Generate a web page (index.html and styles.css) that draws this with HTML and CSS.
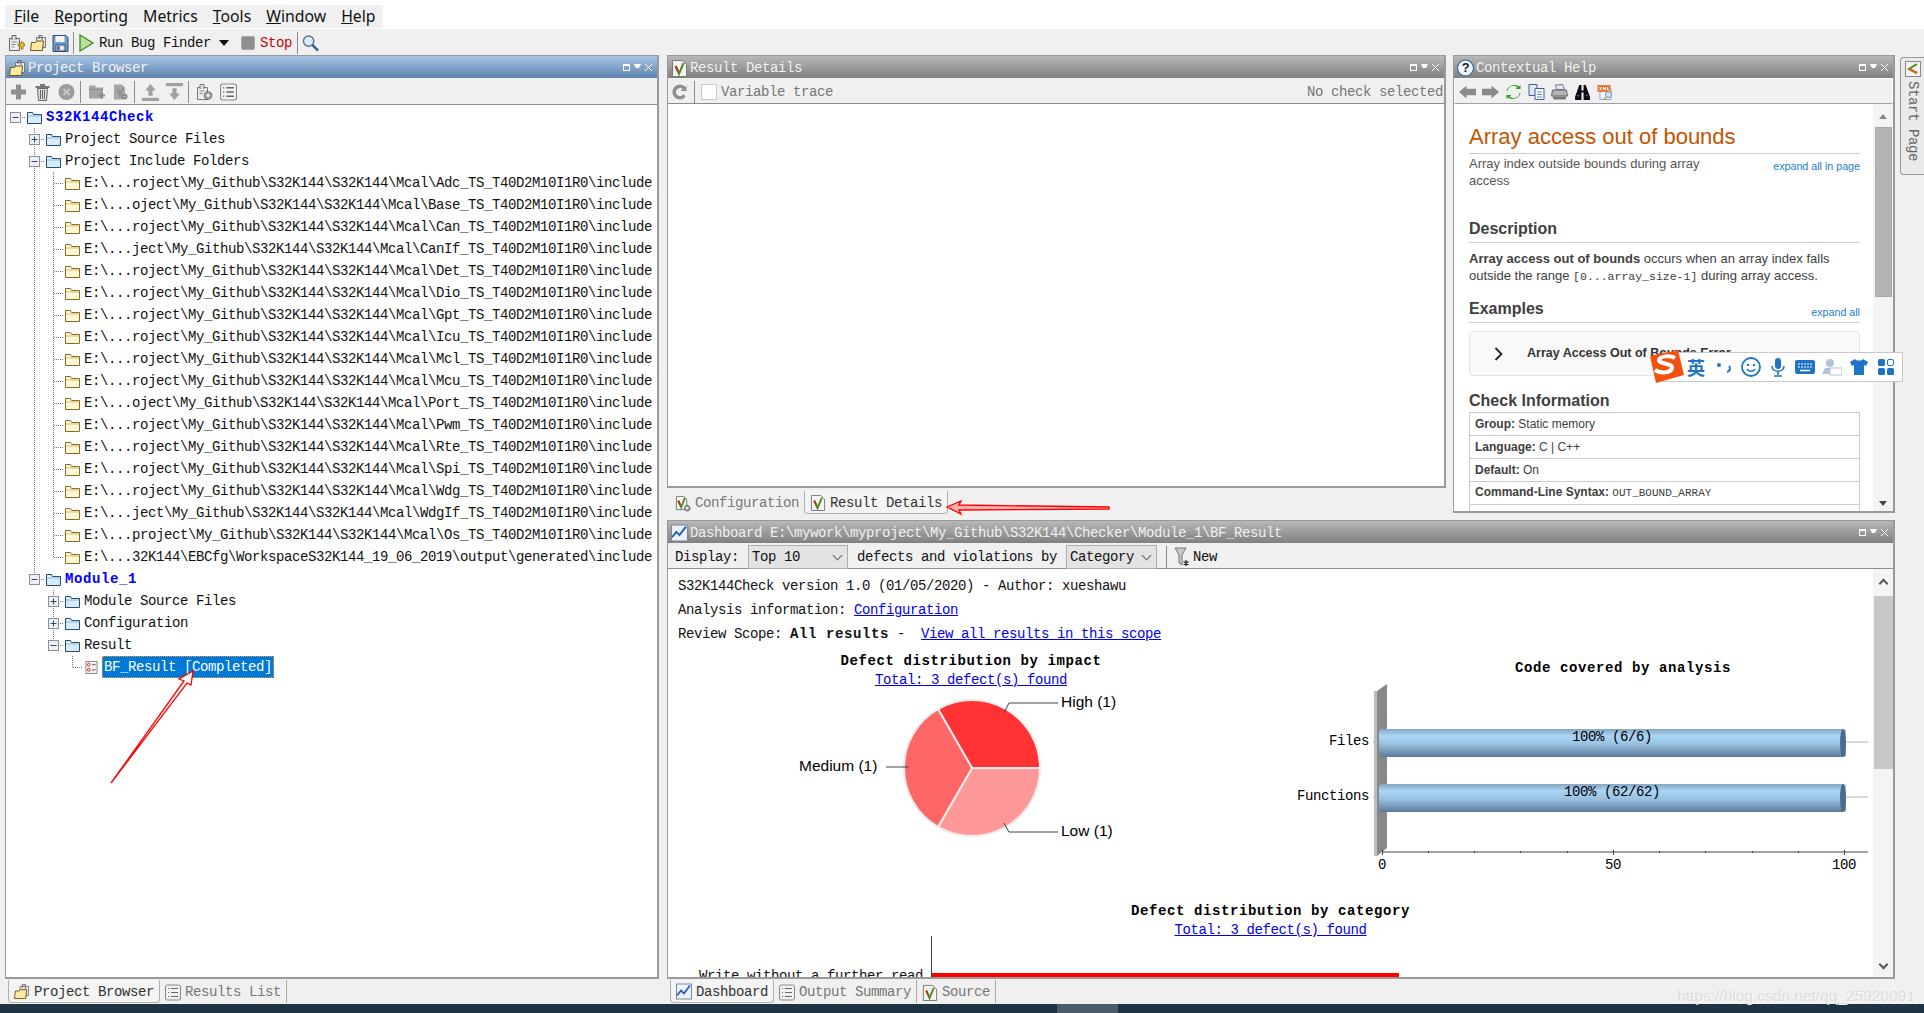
FILE: index.html
```html
<!DOCTYPE html>
<html lang="en">
<head>
    <meta charset="UTF-8">
    <title>Polyspace Bug Finder</title>
    <link rel="stylesheet" href="styles.css">
</head>
<body>

    <!-- Icons -->
    <svg class="defs" width="0" height="0">
        <defs>
            <linearGradient id="barFill" x1="0" y1="0" x2="0" y2="1">
                <stop offset="0" stop-color="#86a5c3"/>
                <stop offset="0.25" stop-color="#abd6f7"/>
                <stop offset="0.55" stop-color="#98bfdf"/>
                <stop offset="1" stop-color="#5c7a9b"/>
            </linearGradient>
        </defs>
        <symbol id="i-exp-plus" viewBox="0 0 11 11"><rect x=".5" y=".5" width="10" height="10" fill="#eef0f4" stroke="#8a8f98"/><path d="M2.500 5.500h6M5.500 2.500v6" stroke="#2b4a78"/></symbol>
        <symbol id="i-exp-minus" viewBox="0 0 11 11"><rect x=".5" y=".5" width="10" height="10" fill="#eef0f4" stroke="#8a8f98"/><path d="M2.500 5.500h6" stroke="#2b4a78"/></symbol>
        <symbol id="i-folder" viewBox="0 0 15 13"><path d="M.5 12.500V1.500h5l1 2h8v9z" fill="#d9ebf8" stroke="#1d4f78"/><path d="M1 5h13" stroke="#8fb8d8"/></symbol>
        <symbol id="i-folder-y" viewBox="0 0 15 13"><path d="M.5 12.500V1.500h5l1 2h8v9z" fill="#fff9d8" stroke="#8b6b22"/><path d="M1 5h13" stroke="#d8bd6a"/></symbol>
        <symbol id="i-project" viewBox="0 0 17 18"><path d="M6.500 3.500h9v10h-9z" fill="#e8e8e8" stroke="#777"/><path d="M9 5V1.500h3V6" fill="none" stroke="#666"/><path d="M.5 16.500l1-8h4l1-1.500h7l-1 9.500z" fill="#fbe9a0" stroke="#6c5a20"/></symbol>
        <symbol id="i-add" viewBox="0 0 17 18"><path d="M1.500 4.500h10v12h-10z" fill="#eee" stroke="#666"/><path d="M4 6V1.500h4V6" fill="#ddd" stroke="#666"/><path d="M3.500 8h6M3.500 10.500h4M3.500 13h3" stroke="#888"/><path d="M10 10h3v-2h2v2h2v2h-2v3h-2v-3h-3z" fill="#f4c430" stroke="#8a6a10" stroke-width=".8"/></symbol>
        <symbol id="i-save" viewBox="0 0 16 18"><path d="M.5 1.500h13l2 2v14H.5z" fill="#6f9cc8" stroke="#2f4f78"/><rect x="3" y="2" width="9" height="6" fill="#f4f4f4"/><rect x="3.500" y="11" width="9" height="6" fill="#e4e4e4" stroke="#2f4f78"/><rect x="5" y="12" width="2" height="4" fill="#2f4f78"/></symbol>
        <symbol id="i-play" viewBox="0 0 15 18"><path d="M1 1l13 8-13 8z" fill="#b8e29a" stroke="#3c8a2a" stroke-width="1.300"/></symbol>
        <symbol id="i-lens" viewBox="0 0 18 18"><circle cx="7" cy="7" r="5.500" fill="#d8ecf8" stroke="#5a7088" stroke-width="1.500"/><path d="M11 11l6 6" stroke="#2f5f98" stroke-width="2.500"/></symbol>
        <symbol id="i-plus" viewBox="0 0 17 17"><path d="M6 1h5v5h5v5h-5v5H6v-5H1V6h5z" fill="#8f8f8f"/></symbol>
        <symbol id="i-trash" viewBox="0 0 17 18"><path d="M1.500 3h14v2h-14zM6 1h5v2H6z" fill="#777"/><path d="M3.500 5.500h10l-1 12h-8z" fill="#dcdcdc" stroke="#666"/><path d="M6.500 7v9M8.500 7v9M10.500 7v9" stroke="#666"/></symbol>
        <symbol id="i-stopx" viewBox="0 0 17 17"><circle cx="8.500" cy="8.500" r="8" fill="#9c9c9c"/><path d="M5.500 5.500l6 6M11.500 5.500l-6 6" stroke="#c8c8c8" stroke-width="1.800"/></symbol>
        <symbol id="i-doc-g" viewBox="0 0 17 17"><path d="M1 2h6l1 2h7v11H1z" fill="#a4a4a4"/><path d="M1 6h14" stroke="#8a8a8a"/><path d="M11 11h2V9h2v2h2v2h-2v2h-2v-2h-2z" fill="#8a8a8a"/></symbol>
        <symbol id="i-doc-x" viewBox="0 0 17 17"><path d="M2 1h8l3 3v8h-2v4H2z" fill="#a6a6a6"/><path d="M6 6l2 6 3-8" fill="none" stroke="#8a8a8a" stroke-width="1.500"/><circle cx="12.500" cy="13" r="3" fill="#8a8a8a"/><circle cx="12.500" cy="13" r="1" fill="#c8c8c8"/></symbol>
        <symbol id="i-up" viewBox="0 0 16 17"><path d="M8 1l5 6h-3v5H6V7H3z" fill="#a0a0a0"/><rect y="14" width="16" height="3" fill="#a0a0a0"/></symbol>
        <symbol id="i-down" viewBox="0 0 16 17"><rect width="16" height="3" fill="#a0a0a0"/><path d="M8 16l5-6h-3V5H6v5H3z" fill="#a0a0a0"/></symbol>
        <symbol id="i-cfg" viewBox="0 0 17 18"><path d="M1.500 4.500h10v12h-10z" fill="#eee" stroke="#777"/><path d="M4 6V1.500h4V6" fill="#ddd" stroke="#777"/><path d="M3.500 8h5M3.500 10.500h3" stroke="#888"/><circle cx="12" cy="12.500" r="3.800" fill="#aaa" stroke="#444" stroke-dasharray="2 .6"/><circle cx="12" cy="12.500" r="1.300" fill="#fff"/></symbol>
        <symbol id="i-cfgcheck" viewBox="0 0 17 18"><path d="M1.500 1.500h8l3 3v11h-11z" fill="#f4f4f4" stroke="#777"/><path d="M3.500 6l3 7 4-10" fill="none" stroke="#4c8a1c" stroke-width="2"/><path d="M3.500 6l2 4.500" stroke="#c8301c" stroke-width="2"/><circle cx="13" cy="14" r="3" fill="#aaa" stroke="#444" stroke-dasharray="2 .6"/><circle cx="13" cy="14" r="1" fill="#fff"/></symbol>
        <symbol id="i-list" viewBox="0 0 16 16"><rect x=".5" y=".5" width="15" height="15" rx="2" fill="#f2f2f2" stroke="#888"/><path d="M3 4h1M6 4h7M3 8h1M6 8h7M3 12h1M6 12h7" stroke="#666" stroke-width="1.200"/></symbol>
        <symbol id="i-check" viewBox="0 0 15 18"><path d="M.5 1.500h10l4 4v12H.5z" fill="#f4f4f4" stroke="#777"/><path d="M3.500 7l3.500 8 4.500-11" fill="none" stroke="#4c8a1c" stroke-width="2"/><path d="M3.500 7l2.500 5" stroke="#c8301c" stroke-width="2"/></symbol>
        <symbol id="i-redo" viewBox="0 0 16 18"><path d="M14 4A7.500 7.500 0 1 0 14 14l-2-3A4 4 0 1 1 11 6L9 8h6V2z" fill="#909090"/></symbol>
        <symbol id="i-trend" viewBox="0 0 16 16"><rect x=".5" y=".5" width="15" height="15" fill="#eef2f8" stroke="#7a8aa0"/><path d="M1 12l4-5 3 3 6-8" fill="none" stroke="#1f5fc0" stroke-width="1.800"/></symbol>
        <symbol id="i-funnel" viewBox="0 0 16 20"><path d="M1 1h11L8 8v10l-3-2V8z" fill="#c8c8c8" stroke="#777"/><path d="M12 13v6M9.500 14.500l5 3M14.500 14.500l-5 3" stroke="#222" stroke-width="1.200"/></symbol>
        <symbol id="i-result" viewBox="0 0 13 14"><rect x=".5" y=".5" width="12" height="13" fill="#f4f1ee" stroke="#888"/><circle cx="3.500" cy="4" r="1.500" fill="none" stroke="#c8301c"/><circle cx="3.500" cy="9.500" r="1.500" fill="none" stroke="#c8301c"/><path d="M7 4h4M7 9.500h4" stroke="#555"/></symbol>
        <symbol id="i-back" viewBox="0 0 16 14"><path d="M0 7l7-6v3h9v6H7v3z" fill="#8a8a8a"/></symbol>
        <symbol id="i-fwd" viewBox="0 0 16 14"><path d="M16 7L9 1v3H0v6h9v3z" fill="#8a8a8a"/></symbol>
        <symbol id="i-sync" viewBox="0 0 16 16"><path d="M2 7a6 6 0 0 1 10-3.500L10 5h5V1l-1.500 1.500A8 8 0 0 0 1 7zM14 9a6 6 0 0 1-10 3.500L6 11H1v4l1.500-1.500A8 8 0 0 0 15 9z" fill="#2e9a20"/></symbol>
        <symbol id="i-copy" viewBox="0 0 16 16"><path d="M.5.500h8v11h-8z" fill="#dfe8f8" stroke="#3f5f98"/><path d="M6.500 4.500h9v11h-9z" fill="#f4f7fc" stroke="#3f5f98"/><path d="M8.500 8h5M8.500 10.500h5M8.500 13h5" stroke="#6f8fc0"/></symbol>
        <symbol id="i-print" viewBox="0 0 16 16"><path d="M4 1l7-.5 2 5H5z" fill="#dfe8f4" stroke="#778"/><path d="M1 6h14l1 6H0z" fill="#b4b4b4" stroke="#666"/><path d="M1 12.500h14l-1 3H2z" fill="#777"/></symbol>
        <symbol id="i-binoc" viewBox="0 0 16 15"><path d="M5 1h2v5h2V1h2l4 11v3H9V8H7v7H1v-3z" fill="#0a0a14"/><path d="M3 11h2M11 11h2" stroke="#6f8fc0"/></symbol>
        <symbol id="i-xml" viewBox="0 0 16 16"><path d="M2.500 4.500h11v11h-11z" fill="#f4f7fc" stroke="#8fa8c8"/><rect y="1" width="13" height="7" fill="#e8783a"/><path d="M2 3l2 3M4 3L2 6M6 6V3l1 2 1-2v3M10 3v3h2" fill="none" stroke="#fff" stroke-width=".8"/><circle cx="11" cy="10.500" r="3" fill="#cfe4f6" stroke="#5f8fb8"/><path d="M9 13l-3 2.500" stroke="#c89a40" stroke-width="1.500"/></symbol>
        <symbol id="i-help" viewBox="0 0 16 16"><circle cx="8" cy="8" r="7.500" fill="#eef3f9" stroke="#2f5f98"/><text x="8" y="12" text-anchor="middle" font-family="Liberation Sans" font-size="12" font-weight="bold" fill="#123">?</text></symbol>
    </svg>

    <!-- Menu -->
    <div class="menubar">
        <ul class="menu">
            <li><u>F</u>ile</li>
            <li><u>R</u>eporting</li>
            <li>Metrics</li>
            <li><u>T</u>ools</li>
            <li><u>W</u>indow</li>
            <li><u>H</u>elp</li>
        </ul>
    </div>

    <!-- Toolbar -->
    <div class="toolbar">
        <svg class="ic"><use href="#i-add"/></svg>
        <svg class="ic"><use href="#i-project"/></svg>
        <svg class="ic"><use href="#i-save"/></svg>
        <span class="sep"></span>
        <svg class="ic"><use href="#i-play"/></svg>
        <span class="run">Run Bug Finder</span>
        <span class="caret"></span>
        <span class="stop-box"></span>
        <span class="stop">Stop</span>
        <span class="sep"></span>
        <svg class="ic"><use href="#i-lens"/></svg>
    </div>

    <div class="work">

        <!-- Left column -->
        <div class="col left-col">
            <section class="panel grow">
                <div class="title active">
                    <svg class="ic"><use href="#i-project"/></svg>
                    <span class="title-text">Project Browser</span>
                    <span class="win-btns"><i class="b-max"></i><i class="b-pin"></i><i class="b-close"></i></span>
                </div>
                <div class="tools pb-tools">
                    <svg class="ic"><use href="#i-plus"/></svg>
                    <svg class="ic"><use href="#i-trash"/></svg>
                    <svg class="ic"><use href="#i-stopx"/></svg>
                    <span class="sep"></span>
                    <svg class="ic"><use href="#i-doc-g"/></svg>
                    <svg class="ic"><use href="#i-doc-x"/></svg>
                    <span class="sep"></span>
                    <svg class="ic"><use href="#i-up"/></svg>
                    <svg class="ic"><use href="#i-down"/></svg>
                    <span class="sep"></span>
                    <svg class="ic"><use href="#i-cfg"/></svg>
                    <svg class="ic"><use href="#i-list"/></svg>
                </div>
                <div class="tree">
                    <div class="row"><i class="tw hr"><svg class="exp"><use href="#i-exp-minus"/></svg></i><i class="tw ico"><svg class="fld"><use href="#i-folder"/></svg></i><b class="proj">S32K144Check</b></div>
                    <div class="row"><i class="tw"></i><i class="tw tee"><svg class="exp"><use href="#i-exp-plus"/></svg></i><i class="tw ico"><svg class="fld"><use href="#i-folder"/></svg></i><span>Project Source Files</span></div>
                    <div class="row"><i class="tw"></i><i class="tw tee"><svg class="exp"><use href="#i-exp-minus"/></svg></i><i class="tw ico"><svg class="fld"><use href="#i-folder"/></svg></i><span>Project Include Folders</span></div>
                    <div class="row"><i class="tw"></i><i class="tw v"></i><i class="tw tee"></i><i class="tw ico"><svg class="fld"><use href="#i-folder-y"/></svg></i><span>E:\...roject\My_Github\S32K144\S32K144\Mcal\Adc_TS_T40D2M10I1R0\include</span></div>
                    <div class="row"><i class="tw"></i><i class="tw v"></i><i class="tw tee"></i><i class="tw ico"><svg class="fld"><use href="#i-folder-y"/></svg></i><span>E:\...oject\My_Github\S32K144\S32K144\Mcal\Base_TS_T40D2M10I1R0\include</span></div>
                    <div class="row"><i class="tw"></i><i class="tw v"></i><i class="tw tee"></i><i class="tw ico"><svg class="fld"><use href="#i-folder-y"/></svg></i><span>E:\...roject\My_Github\S32K144\S32K144\Mcal\Can_TS_T40D2M10I1R0\include</span></div>
                    <div class="row"><i class="tw"></i><i class="tw v"></i><i class="tw tee"></i><i class="tw ico"><svg class="fld"><use href="#i-folder-y"/></svg></i><span>E:\...ject\My_Github\S32K144\S32K144\Mcal\CanIf_TS_T40D2M10I1R0\include</span></div>
                    <div class="row"><i class="tw"></i><i class="tw v"></i><i class="tw tee"></i><i class="tw ico"><svg class="fld"><use href="#i-folder-y"/></svg></i><span>E:\...roject\My_Github\S32K144\S32K144\Mcal\Det_TS_T40D2M10I1R0\include</span></div>
                    <div class="row"><i class="tw"></i><i class="tw v"></i><i class="tw tee"></i><i class="tw ico"><svg class="fld"><use href="#i-folder-y"/></svg></i><span>E:\...roject\My_Github\S32K144\S32K144\Mcal\Dio_TS_T40D2M10I1R0\include</span></div>
                    <div class="row"><i class="tw"></i><i class="tw v"></i><i class="tw tee"></i><i class="tw ico"><svg class="fld"><use href="#i-folder-y"/></svg></i><span>E:\...roject\My_Github\S32K144\S32K144\Mcal\Gpt_TS_T40D2M10I1R0\include</span></div>
                    <div class="row"><i class="tw"></i><i class="tw v"></i><i class="tw tee"></i><i class="tw ico"><svg class="fld"><use href="#i-folder-y"/></svg></i><span>E:\...roject\My_Github\S32K144\S32K144\Mcal\Icu_TS_T40D2M10I1R0\include</span></div>
                    <div class="row"><i class="tw"></i><i class="tw v"></i><i class="tw tee"></i><i class="tw ico"><svg class="fld"><use href="#i-folder-y"/></svg></i><span>E:\...roject\My_Github\S32K144\S32K144\Mcal\Mcl_TS_T40D2M10I1R0\include</span></div>
                    <div class="row"><i class="tw"></i><i class="tw v"></i><i class="tw tee"></i><i class="tw ico"><svg class="fld"><use href="#i-folder-y"/></svg></i><span>E:\...roject\My_Github\S32K144\S32K144\Mcal\Mcu_TS_T40D2M10I1R0\include</span></div>
                    <div class="row"><i class="tw"></i><i class="tw v"></i><i class="tw tee"></i><i class="tw ico"><svg class="fld"><use href="#i-folder-y"/></svg></i><span>E:\...oject\My_Github\S32K144\S32K144\Mcal\Port_TS_T40D2M10I1R0\include</span></div>
                    <div class="row"><i class="tw"></i><i class="tw v"></i><i class="tw tee"></i><i class="tw ico"><svg class="fld"><use href="#i-folder-y"/></svg></i><span>E:\...roject\My_Github\S32K144\S32K144\Mcal\Pwm_TS_T40D2M10I1R0\include</span></div>
                    <div class="row"><i class="tw"></i><i class="tw v"></i><i class="tw tee"></i><i class="tw ico"><svg class="fld"><use href="#i-folder-y"/></svg></i><span>E:\...roject\My_Github\S32K144\S32K144\Mcal\Rte_TS_T40D2M10I1R0\include</span></div>
                    <div class="row"><i class="tw"></i><i class="tw v"></i><i class="tw tee"></i><i class="tw ico"><svg class="fld"><use href="#i-folder-y"/></svg></i><span>E:\...roject\My_Github\S32K144\S32K144\Mcal\Spi_TS_T40D2M10I1R0\include</span></div>
                    <div class="row"><i class="tw"></i><i class="tw v"></i><i class="tw tee"></i><i class="tw ico"><svg class="fld"><use href="#i-folder-y"/></svg></i><span>E:\...roject\My_Github\S32K144\S32K144\Mcal\Wdg_TS_T40D2M10I1R0\include</span></div>
                    <div class="row"><i class="tw"></i><i class="tw v"></i><i class="tw tee"></i><i class="tw ico"><svg class="fld"><use href="#i-folder-y"/></svg></i><span>E:\...ject\My_Github\S32K144\S32K144\Mcal\WdgIf_TS_T40D2M10I1R0\include</span></div>
                    <div class="row"><i class="tw"></i><i class="tw v"></i><i class="tw tee"></i><i class="tw ico"><svg class="fld"><use href="#i-folder-y"/></svg></i><span>E:\...project\My_Github\S32K144\S32K144\Mcal\Os_TS_T40D2M10I1R0\include</span></div>
                    <div class="row"><i class="tw"></i><i class="tw v"></i><i class="tw end"></i><i class="tw ico"><svg class="fld"><use href="#i-folder-y"/></svg></i><span>E:\...32K144\EBCfg\WorkspaceS32K144_19_06_2019\output\generated\include</span></div>
                    <div class="row"><i class="tw"></i><i class="tw end"><svg class="exp"><use href="#i-exp-minus"/></svg></i><i class="tw ico"><svg class="fld"><use href="#i-folder"/></svg></i><b class="proj">Module_1</b></div>
                    <div class="row"><i class="tw"></i><i class="tw"></i><i class="tw tee"><svg class="exp"><use href="#i-exp-plus"/></svg></i><i class="tw ico"><svg class="fld"><use href="#i-folder"/></svg></i><span>Module Source Files</span></div>
                    <div class="row"><i class="tw"></i><i class="tw"></i><i class="tw tee"><svg class="exp"><use href="#i-exp-plus"/></svg></i><i class="tw ico"><svg class="fld"><use href="#i-folder"/></svg></i><span>Configuration</span></div>
                    <div class="row"><i class="tw"></i><i class="tw"></i><i class="tw end"><svg class="exp"><use href="#i-exp-minus"/></svg></i><i class="tw ico"><svg class="fld"><use href="#i-folder"/></svg></i><span>Result</span></div>
                    <div class="row"><i class="tw"></i><i class="tw"></i><i class="tw"></i><i class="tw end"></i><i class="tw ico"><svg class="fld"><use href="#i-result"/></svg></i><span class="selected">BF_Result [Completed]</span></div>
                </div>
            </section>
            <div class="tabs pb-tabs">
                <div class="tab on"><svg class="ic"><use href="#i-project"/></svg>Project Browser</div>
                <div class="tab off"><svg class="ic"><use href="#i-list"/></svg>Results List</div>
            </div>
        </div>

        <!-- Right part -->
        <div class="col right-col">
            <div class="top-row">
                <div class="col result-col">
                    <section class="panel grow">
                        <div class="title">
                            <svg class="ic"><use href="#i-check"/></svg>
                            <span class="title-text">Result Details</span>
                            <span class="win-btns"><i class="b-max"></i><i class="b-pin"></i><i class="b-close"></i></span>
                        </div>
                        <div class="tools rd-tools">
                            <svg class="ic"><use href="#i-redo"/></svg>
                            <span class="sep"></span>
                            <span class="chk"></span>
                            <span class="dim">Variable trace</span>
                            <span class="dim right">No check selected</span>
                        </div>
                        <div class="blank"></div>
                    </section>
                    <div class="tabs rd-tabs">
                        <div class="tab off"><svg class="ic"><use href="#i-cfgcheck"/></svg>Configuration</div>
                        <div class="tab on"><svg class="ic"><use href="#i-check"/></svg>Result Details</div>
                    </div>
                </div>

                <section class="panel help-panel">
                    <div class="title">
                        <svg class="ic"><use href="#i-help"/></svg>
                        <span class="title-text">Contextual Help</span>
                        <span class="win-btns"><i class="b-max"></i><i class="b-pin"></i><i class="b-close"></i></span>
                    </div>
                    <div class="tools help-tools">
                        <svg class="ic"><use href="#i-back"/></svg>
                        <svg class="ic"><use href="#i-fwd"/></svg>
                        <svg class="ic"><use href="#i-sync"/></svg>
                        <svg class="ic"><use href="#i-copy"/></svg>
                        <svg class="ic"><use href="#i-print"/></svg>
                        <svg class="ic"><use href="#i-binoc"/></svg>
                        <svg class="ic"><use href="#i-xml"/></svg>
                    </div>
                    <div class="help-body">
                        <div class="doc">
                            <h1>Array access out of bounds</h1>
                            <div class="doc-sub">
                                <p>Array index outside bounds during array access</p>
                                <a href="#">expand all in page</a>
                            </div>
                            <h2>Description</h2>
                            <p class="doc-p"><b>Array access out of bounds</b> occurs when an array index falls outside the range <code>[0...array_size-1]</code> during array access.</p>
                            <h2 class="h-ex">Examples <a href="#">expand all</a></h2>
                            <div class="example">
                                <svg class="chev" viewBox="0 0 10 14"><path d="M1.500 1l6 6-6 6" fill="none" stroke="#222" stroke-width="1.800"/></svg>
                                <b>Array Access Out of Bounds Error</b>
                            </div>
                            <h2 class="h-info">Check Information</h2>
                            <table class="info">
                                <tr><td><b>Group:</b> Static memory</td></tr>
                                <tr><td><b>Language:</b> C | C++</td></tr>
                                <tr><td><b>Default:</b> On</td></tr>
                                <tr><td><b>Command-Line Syntax:</b> <code>OUT_BOUND_ARRAY</code></td></tr>
                                <tr><td><b>Impact:</b> High</td></tr>
                            </table>
                        </div>
                        <div class="scroll help-scroll">
                            <span class="arr-up"></span>
                            <span class="thumb"></span>
                            <span class="fill"></span>
                            <span class="arr-down"></span>
                        </div>
                    </div>
                </section>
            </div>

            <section class="panel dash-panel">
                <div class="title">
                    <svg class="ic"><use href="#i-trend"/></svg>
                    <span class="title-text">Dashboard E:\mywork\myproject\My_Github\S32K144\Checker\Module_1\BF_Result</span>
                    <span class="win-btns"><i class="b-max"></i><i class="b-pin"></i><i class="b-close"></i></span>
                </div>
                <div class="tools dash-tools">
                    <span>Display:</span>
                    <span class="select sel-top">Top 10</span>
                    <span>defects and violations by</span>
                    <span class="select sel-cat">Category</span>
                    <span class="sep"></span>
                    <svg class="ic"><use href="#i-funnel"/></svg>
                    <span class="new">New</span>
                </div>
                <div class="dash-body">
                    <div class="report">
                        <p class="line l1">S32K144Check version 1.0 (01/05/2020) - Author: xueshawu</p>
                        <p class="line l2">Analysis information: <a href="#">Configuration</a></p>
                        <p class="line l3">Review Scope: <b>All results</b> - &nbsp;<a href="#">View all results in this scope</a></p>

                        <div class="charts">
                            <div class="impact">
                                <div class="chart-title">Defect distribution by impact</div>
                                <a class="chart-link" href="#">Total: 3 defect(s) found</a>
                                <svg class="pie" viewBox="0 0 606 214">
                                    <circle cx="304" cy="80" r="69" fill="#eee"/>
                                    <path d="M304 80L270 21.100A68 68 0 0 1 372 80Z" fill="#ff3333" stroke="#eee" stroke-width="2"/>
                                    <path d="M304 80L372 80A68 68 0 0 1 270 138.900Z" fill="#ff9999" stroke="#eee" stroke-width="2"/>
                                    <path d="M304 80L270 138.900A68 68 0 0 1 270 21.100Z" fill="#ff6666" stroke="#eee" stroke-width="2"/>
                                    <path d="M336 25l5-10h49M336 135l5 9h49M218 79h23" fill="none" stroke="#444"/>
                                    <text class="pie-label" x="393" y="19">High (1)</text>
                                    <text class="pie-label" x="393" y="148">Low (1)</text>
                                    <text class="pie-label" x="131" y="83">Medium (1)</text>
                                </svg>
                            </div>
                            <svg class="bars" viewBox="0 0 600 250">
                                <text class="bar-title" x="349" y="20" text-anchor="middle">Code covered by analysis</text>
                                <rect x="100" y="39" width="3" height="165" fill="#bdbdbd"/>
                                <path d="M103 39L113 32V196L103 204Z" fill="#888"/>
                                <path d="M572 90H594M572 145H594M99 90H104M99 145H104" stroke="#b4b4b4"/>
                                <rect x="105" y="77" width="467" height="28" rx="3" fill="url(#barFill)"/>
                                <ellipse cx="569" cy="91" rx="3" ry="14" fill="#4c6a8e"/>
                                <rect x="105" y="132" width="467" height="28" rx="3" fill="url(#barFill)"/>
                                <ellipse cx="569" cy="146" rx="3" ry="14" fill="#4c6a8e"/>
                                <path d="M108 200H594" stroke="#444"/>
                                <path d="M108.500 198V203M154.500 199V201M200.500 199V201M246.500 199V201M293.500 199V201M339.500 198V203M385.500 199V201M431.500 199V201M478.500 199V201M524.500 199V201M570.500 198V203" stroke="#444"/>
                                <text x="95" y="93" text-anchor="end">Files</text>
                                <text x="95" y="148" text-anchor="end">Functions</text>
                                <text x="338" y="89" text-anchor="middle">100% (6/6)</text>
                                <text x="338" y="144" text-anchor="middle">100% (62/62)</text>
                                <text x="108" y="217" text-anchor="middle">0</text>
                                <text x="339" y="217" text-anchor="middle">50</text>
                                <text x="570" y="217" text-anchor="middle">100</text>
                            </svg>
                        </div>

                        <div class="category">
                            <div class="chart-title">Defect distribution by category</div>
                            <a class="chart-link" href="#">Total: 3 defect(s) found</a>
                            <div class="cat-row">
                                <span class="cat-label">Write without a further read</span>
                                <span class="cat-bar"></span>
                            </div>
                        </div>
                    </div>
                    <div class="scroll dash-scroll">
                        <span class="chev-up"></span>
                        <span class="thumb"></span>
                        <span class="fill"></span>
                        <span class="chev-down"></span>
                    </div>
                </div>
            </section>

            <div class="tabs dash-tabs">
                <div class="tab on"><svg class="ic"><use href="#i-trend"/></svg>Dashboard</div>
                <div class="tab off"><svg class="ic"><use href="#i-list"/></svg>Output Summary</div>
                <div class="tab off"><svg class="ic"><use href="#i-check"/></svg>Source</div>
            </div>
            <span class="watermark">https://blog.csdn.net/qq_25920091</span>
        </div>

        <!-- Start page tab -->
        <div class="start-tab">
            <svg class="ic" viewBox="0 0 16 16"><rect x=".5" y=".5" width="15" height="15" fill="#f4f4f4" stroke="#888"/><path d="M12 3L4 8l8 4" fill="none" stroke="#4c8a1c" stroke-width="2"/><path d="M4 8l8 4" stroke="#d8641c" stroke-width="2"/></svg>
            <span>Start Page</span>
        </div>
    </div>

    <!-- Taskbar -->
    <div class="taskbar"><span class="task-item"></span></div>

    <!-- Red annotation arrows -->
    <svg class="notes" viewBox="0 0 1924 1013">
        <path d="M111 783L184 681L179 679L193 671L191 685L187 683Z" fill="#fff" stroke="#f00" stroke-width="1.300"/>
        <path d="M947 507L961 501L959 505L1109 507V509L959 510L961 514Z" fill="#ffb0b0" stroke="#f00" stroke-width="1.300"/>
    </svg>

    <!-- Input method bar -->
    <div class="ime">
        <svg class="ime-logo" viewBox="0 0 36 33"><path d="M2 6L30 0l6 25-28 8z" fill="#f4500f"/><path d="M27 8c-5-3-15-2-16 2s14 3 13 8-11 6-17 2" fill="none" stroke="#fff" stroke-width="4"/></svg>
        <span class="ime-ying">英</span>
        <svg class="ime-ic" viewBox="0 0 20 20"><circle cx="5" cy="8" r="2" fill="#2074c8"/><path d="M15 9c2 2 1 5-2 6" fill="none" stroke="#2074c8" stroke-width="2"/></svg>
        <svg class="ime-ic" viewBox="0 0 20 20"><circle cx="10" cy="10" r="9" fill="none" stroke="#2074c8" stroke-width="1.800"/><circle cx="7" cy="8" r="1.200" fill="#2074c8"/><circle cx="13" cy="8" r="1.200" fill="#2074c8"/><path d="M6 12c2 3 6 3 8 0" fill="none" stroke="#2074c8" stroke-width="1.400"/></svg>
        <svg class="ime-ic" viewBox="0 0 20 20"><rect x="7" y="1" width="6" height="11" rx="3" fill="#2074c8"/><path d="M4 9c0 7 12 7 12 0M10 15v3M6 19h8" fill="none" stroke="#2074c8" stroke-width="1.600"/></svg>
        <svg class="ime-ic" viewBox="0 0 20 20"><rect y="3" width="20" height="14" rx="2" fill="#2074c8"/><path d="M3 7h14M3 10h14" stroke="#fff" stroke-dasharray="2 1"/><path d="M5 13.500h10" stroke="#fff" stroke-width="1.500"/></svg>
        <svg class="ime-ic" viewBox="0 0 20 20"><circle cx="8" cy="6" r="4" fill="#b4c4d8"/><path d="M0 17l3-6h8v6z" fill="#b4c4d8"/><rect x="8" y="11" width="12" height="7" fill="#fff" stroke="#b4c4d8"/></svg>
        <svg class="ime-ic" viewBox="0 0 20 20"><path d="M6 2L1 5l2 4 2-1v10h10V8l2 1 2-4-5-3c-1 2-7 2-8 0z" fill="#2074c8"/></svg>
        <svg class="ime-ic" viewBox="0 0 20 20"><rect x="2" y="2" width="7" height="7" rx="1.500" fill="#2074c8"/><rect x="11.500" y="2.500" width="6" height="6" rx="1.500" fill="none" stroke="#2074c8"/><rect x="2" y="11" width="7" height="7" rx="1.500" fill="#2074c8"/><rect x="11" y="11" width="7" height="7" rx="1.500" fill="#2074c8"/></svg>
    </div>

</body>
</html>
```

FILE: styles.css
```css
/* Umum */
* {
    box-sizing: border-box;
}

html, body {
    margin: 0;
    height: 100%;
    overflow: hidden;
}

body {
    position: relative;
    display: flex;
    flex-direction: column;
    height: 1013px;
    background-color: #f0f0f0;
    color: #111;
    font-family: "Liberation Mono", monospace;
    font-size: 14px;
    letter-spacing: -0.4px;
}

.defs {
    position: absolute;
}

p {
    margin: 0;
}

a {
    color: #0000ee;
}

i {
    font-style: normal;
}

b {
    letter-spacing: 0.6px;
}

.ic {
    display: block;
    width: 17px;
    height: 18px;
    flex: none;
}

.sep {
    width: 1px;
    height: 22px;
    background-color: #8c8c8c;
    flex: none;
}

/* Menu */
.menubar {
    height: 29px;
    padding: 5px 0 1px 5px;
    background-color: #fff;
    flex: none;
}

.menu {
    display: flex;
    width: 378px;
    height: 23px;
    margin: 0;
    padding: 0 0 0 9px;
    gap: 15px;
    list-style: none;
    background-color: #f0f0f0;
    font-family: "Noto Sans", sans-serif;
    font-size: 15.8px;
    line-height: 22px;
    letter-spacing: 0;
}

/* Toolbar */
.toolbar {
    display: flex;
    align-items: center;
    height: 26px;
    margin-left: 5px;
    padding: 1px 0 0 3px;
    gap: 5px;
    flex: none;
}

.toolbar .sep {
    margin: 0 -1px 0 -1px;
}

.run {
    margin-left: -1px;
}

.caret {
    width: 0;
    height: 0;
    margin: 0 7px 0 3px;
    border-left: 5px solid transparent;
    border-right: 5px solid transparent;
    border-top: 6px solid #111;
}

.stop-box {
    width: 14px;
    height: 14px;
    border-radius: 2px;
    background-color: #8f8f8f;
    border: 1px solid #a8a8a8;
}

.stop {
    color: #d00000;
    margin-right: 1px;
}

/* Kolom */
.work {
    display: flex;
    flex: 1;
    min-height: 0;
    padding-left: 5px;
}

.col {
    display: flex;
    flex-direction: column;
    min-height: 0;
}

.left-col {
    width: 654px;
    margin-right: 8px;
    flex: none;
}

.right-col {
    position: relative;
    width: 1228px;
    flex: none;
}

.grow {
    flex: 1;
    min-height: 0;
}

.top-row {
    display: flex;
    gap: 7px;
    height: 458px;
    margin-bottom: 7px;
    flex: none;
}

.result-col {
    width: 779px;
    flex: none;
}

/* Panel */
.panel {
    display: flex;
    flex-direction: column;
    border: 1px solid #9a9a9a;
    border-width: 1px 2px 2px 1px;
    background-color: #f0f0f0;
    overflow: hidden;
}

.help-panel {
    flex: 1;
    min-width: 0;
}

.dash-panel {
    height: 459px;
    flex: none;
}

.title {
    display: flex;
    align-items: center;
    height: 22px;
    padding: 1px 0 0 3px;
    gap: 2px;
    background: linear-gradient(#b8b8b8, #808080);
    color: #f0f0f0;
    flex: none;
}

.title.active {
    background: linear-gradient(#a8c6e6, #5f83ae);
}

.win-btns {
    display: flex;
    align-items: center;
    gap: 4px;
    margin-left: auto;
    padding-right: 5px;
}

.win-btns i {
    display: block;
    width: 7px;
    height: 7px;
}

.b-max {
    border: 1px solid #fff;
    border-top-width: 2px;
}

.b-pin {
    border-top: 4px solid #fff;
    border-bottom: 3px solid transparent;
    border-left: 2px solid transparent;
    border-right: 2px solid transparent;
}

.b-close {
    background:
        linear-gradient(45deg, transparent 45%, #fff 45% 55%, transparent 55%),
        linear-gradient(-45deg, transparent 45%, #fff 45% 55%, transparent 55%);
}

.tools {
    display: flex;
    align-items: center;
    flex: none;
    height: 26px;
    padding-top: 1px;
}

.pb-tools {
    gap: 7px;
    padding-left: 4px;
}

.pb-tools .sep {
    margin-left: -2px;
}

.rd-tools {
    gap: 6px;
    padding-top: 2px;
    padding-right: 1px;
    padding-left: 3px;
    border-bottom: 1px solid #8c8c8c;
}

.chk {
    width: 16px;
    height: 16px;
    margin-right: -2px;
    background-color: #fff;
    border: 1px solid #c8c8c8;
}

.dim {
    color: #777;
}

.right {
    margin-left: auto;
}

.blank {
    flex: 1;
    background-color: #fff;
}

/* Pohon proyek */
.tree {
    flex: 1;
    min-height: 0;
    padding-top: 1px;
    background-color: #fff;
    border-top: 1px solid #8c8c8c;
    overflow: hidden;
    white-space: nowrap;
}

.row {
    display: flex;
    align-items: center;
    height: 22px;
}

.tw {
    display: flex;
    align-items: center;
    justify-content: center;
    width: 19px;
    height: 22px;
    flex: none;
}

.v {
    background: repeating-linear-gradient(#777 0 1px, transparent 1px 2px) center / 1px 100% no-repeat;
}

.hr {
    background: repeating-linear-gradient(90deg, #777 0 1px, transparent 1px 2px) right center / 50% 1px no-repeat;
}

.tee {
    background:
        repeating-linear-gradient(#777 0 1px, transparent 1px 2px) center / 1px 100% no-repeat,
        repeating-linear-gradient(90deg, #777 0 1px, transparent 1px 2px) right center / 50% 1px no-repeat;
}

.end {
    background:
        repeating-linear-gradient(#777 0 1px, transparent 1px 2px) center top / 1px 50% no-repeat,
        repeating-linear-gradient(90deg, #777 0 1px, transparent 1px 2px) right center / 50% 1px no-repeat;
}

.exp {
    display: block;
    width: 11px;
    height: 11px;
}

.ico {
    justify-content: flex-start;
    padding-left: 2px;
}

.fld {
    display: block;
    width: 15px;
    height: 13px;
}

.proj {
    color: #0000ff;
    padding-left: 2px;
}

.row > span {
    padding-left: 2px;
}

.row > .selected {
    margin-left: 1px;
    padding: 0 1px;
    height: 22px;
    line-height: 20px;
    background-color: #0078d7;
    color: #fff;
    border: 1px dotted #f29a38;
}

/* Tab bawah */
.tabs {
    display: flex;
    align-items: flex-start;
    flex: none;
    height: 25px;
    padding: 1px 0 0 3px;
    color: #333;
}

.tab {
    display: flex;
    align-items: center;
    gap: 4px;
    height: 23px;
    padding: 1px 5px 0;
    white-space: nowrap;
}

.tab .ic {
    width: 16px;
    height: 17px;
}

.tab.on {
    border: 1px solid #b0b0b0;
    border-top: none;
    border-radius: 0 0 4px 4px;
    background-color: #f4f4f4;
}

.tab.off {
    color: #777;
    border-right: 1px solid #aaa;
}

.rd-tabs {
    padding-left: 3px;
    padding-top: 3px;
}

.rd-tabs .tab.off {
    border-right: none;
}

/* Bantuan */
.help-tools {
    gap: 6px;
    padding-left: 4px;
    border: 1px solid #fff;
    border-bottom: 1px solid #a0a0a0;
}

.help-tools .ic {
    width: 17px;
    height: 16px;
}

.help-body {
    display: flex;
    flex: 1;
    min-height: 0;
    background-color: #fff;
}

.doc {
    flex: 1;
    min-width: 0;
    padding: 0 13px 0 15px;
    overflow: hidden;
    color: #404040;
    font-family: "Liberation Sans", Arial, sans-serif;
    font-size: 13px;
    letter-spacing: 0;
    line-height: 17px;
}

.doc b {
    letter-spacing: 0;
}

.doc h1 {
    margin: 19px 0 0;
    padding-bottom: 2px;
    font-size: 22px;
    font-weight: normal;
    line-height: 28px;
    color: #c45400;
    border-bottom: 1px solid #ccc;
}

.doc-sub {
    display: flex;
    justify-content: space-between;
    height: 64px;
    padding-top: 1px;
}

.doc-sub p {
    width: 240px;
    color: #555;
}

.doc a {
    color: #2080c8;
    text-decoration: none;
    font-size: 10.7px;
}

.doc-sub a {
    margin-top: 3px;
}

.doc h2 {
    margin: 0;
    font-size: 16px;
    line-height: 22px;
    padding-bottom: 2px;
    border-bottom: 1px solid #ccc;
    color: #404040;
}

.doc-p {
    margin-top: 7px;
}

.doc code {
    font-family: "Liberation Mono", monospace;
    font-size: 11.5px;
}

.h-ex {
    display: flex;
    justify-content: space-between;
    align-items: flex-end;
    margin-top: 13px !important;
}

.h-ex a {
    font-weight: normal;
    line-height: 16px;
}

.example {
    display: flex;
    align-items: center;
    height: 45px;
    margin-top: 8px;
    padding-left: 24px;
    gap: 23px;
    background-color: #f9f9f9;
    border: 1px solid #e6e6e6;
    border-radius: 4px;
    color: #333;
    font-size: 12.5px;
}

.chev {
    width: 10px;
    height: 14px;
}

.h-info {
    margin-top: 14px !important;
    border-bottom: none !important;
    padding-bottom: 0 !important;
}

.info {
    width: 100%;
    border-collapse: collapse;
    font-size: 12px;
}

.info td {
    height: 23px;
    padding: 0 5px;
    border: 1px solid #ccc;
}

.info code {
    font-size: 11px;
}

/* Scrollbar */
.scroll {
    display: flex;
    flex-direction: column;
    align-items: center;
    width: 20px;
    flex: none;
    background-color: #f4f4f4;
}

.thumb {
    display: block;
    width: 17px;
    background-color: #b4b4b4;
    border: 1px solid #a8a8a8;
}

.fill {
    flex: 1;
}

.help-scroll .thumb {
    height: 170px;
    margin-top: 8px;
}

.arr-up,
.arr-down {
    width: 0;
    height: 0;
    border-left: 4px solid transparent;
    border-right: 4px solid transparent;
}

.arr-up {
    margin-top: 10px;
    border-bottom: 5px solid #888;
}

.arr-down {
    margin-bottom: 5px;
    border-top: 5px solid #444;
}

.dash-scroll .thumb {
    width: 19px;
    height: 173px;
    margin-top: 9px;
    background-color: #c8c8c8;
    border-color: #c8c8c8;
}

.chev-up,
.chev-down {
    width: 7px;
    height: 7px;
    border: solid #555;
    border-width: 2px 0 0 2px;
    flex: none;
}

.chev-up {
    margin-top: 11px;
    transform: rotate(45deg);
}

.chev-down {
    margin-bottom: 9px;
    transform: rotate(225deg);
}

/* Dashboard */
.dash-tools {
    gap: 9px;
    padding-top: 2px;
    padding-left: 7px;
    border-bottom: 1px solid #8c8c8c;
}

.select {
    display: flex;
    align-items: center;
    height: 24px;
    padding-left: 3px;
    background-color: #e3e3e3;
    border: 1px solid #adadad;
    position: relative;
}

.select::after {
    content: "";
    position: absolute;
    right: 6px;
    top: 6px;
    width: 6px;
    height: 6px;
    border: solid #666;
    border-width: 0 1px 1px 0;
    transform: rotate(45deg);
}

.sel-top {
    width: 100px;
}

.sel-cat {
    width: 91px;
}

.dash-tools .ic {
    margin-left: -2px;
    width: 16px;
    height: 20px;
}

.new {
    margin-left: -6px;
}

.dash-body {
    display: flex;
    flex: 1;
    min-height: 0;
    background-color: #fff;
}

.report {
    flex: 1;
    min-width: 0;
    overflow: hidden;
}

.line {
    padding-left: 10px;
}

.l1 {
    height: 23px;
    padding-top: 9px;
}

.l2 {
    height: 25px;
    margin-top: 3px;
    padding-top: 7px;
}

.l3 {
    height: 20px;
    padding-top: 6px;
}

.charts {
    display: flex;
    margin-top: 12px;
    height: 250px;
}

.impact {
    display: flex;
    flex-direction: column;
    align-items: center;
    width: 606px;
    flex: none;
}

.chart-title {
    height: 19px;
    line-height: 18px;
    font-weight: bold;
    letter-spacing: 0.6px;
    color: #000;
}

.chart-link {
    display: block;
    height: 18px;
    line-height: 18px;
}

.pie {
    display: block;
    width: 606px;
    height: 214px;
    margin-top: -1px;
    flex: none;
}

.pie-label {
    font-family: "Liberation Sans", Arial, sans-serif;
    font-size: 15.5px;
    letter-spacing: 0;
}

.bars {
    display: block;
    width: 600px;
    height: 250px;
    flex: none;
}

.bar-title {
    font-weight: bold;
    letter-spacing: 0.6px;
}

.category {
    display: flex;
    flex-direction: column;
    align-items: center;
}

.cat-row {
    display: flex;
    align-items: flex-end;
    width: 100%;
    height: 41px;
    margin-top: -3px;
    padding-left: 263px;
    overflow: hidden;
}

.cat-label {
    flex: none;
    width: 240px;
    margin-left: -240px;
    margin-bottom: -7px;
    padding-right: 8px;
    text-align: right;
    line-height: 16px;
    white-space: nowrap;
}

.cat-bar {
    flex: none;
    width: 468px;
    height: 41px;
    border-left: 1px solid #444;
    background: linear-gradient(#ff0000, #ff0000) left bottom / 100% 4px no-repeat;
}

/* Start Page */
.start-tab {
    display: flex;
    flex-direction: column;
    align-items: center;
    width: 24px;
    height: 118px;
    margin: 2px 0 0 5px;
    padding-top: 3px;
    gap: 4px;
    flex: none;
    background-color: #eaeaea;
    border: 1px solid #9a9a9a;
    border-right: none;
    border-radius: 4px 0 0 4px;
    color: #666;
}

.start-tab .ic {
    width: 16px;
    height: 16px;
}

.start-tab span {
    writing-mode: vertical-rl;
    line-height: 18px;
}

/* Taskbar */
.taskbar {
    height: 9px;
    flex: none;
    padding-left: 1057px;
    background-color: #1f3442;
}

.task-item {
    display: block;
    width: 61px;
    height: 9px;
    background-color: #4a5c68;
}

.watermark {
    position: absolute;
    right: -20px;
    bottom: -1px;
    color: #dcdcdc;
    font-family: "Liberation Sans", Arial, sans-serif;
    font-size: 15.5px;
    letter-spacing: 0;
    line-height: 18px;
    text-shadow: 1px 1px 0 #f8f8f8;
}

/* Anotasi */
.notes {
    position: absolute;
    left: 0;
    top: 0;
    width: 1924px;
    height: 1013px;
    pointer-events: none;
}

.ime {
    position: absolute;
    left: 1662px;
    top: 352px;
    display: flex;
    align-items: center;
    gap: 7px;
    width: 241px;
    height: 30px;
    padding-left: 24px;
    background-color: #fff;
    border: 1px solid #c8c8c8;
}

.ime-logo {
    position: absolute;
    left: -15px;
    top: -3px;
    width: 36px;
    height: 33px;
}

.ime-ying {
    width: 20px;
    color: #2074c8;
    font-family: "Noto Sans CJK SC", sans-serif;
    font-size: 18px;
    font-weight: bold;
    letter-spacing: 0;
    line-height: 28px;
}

.ime-ic {
    width: 20px;
    height: 20px;
    flex: none;
}
```
